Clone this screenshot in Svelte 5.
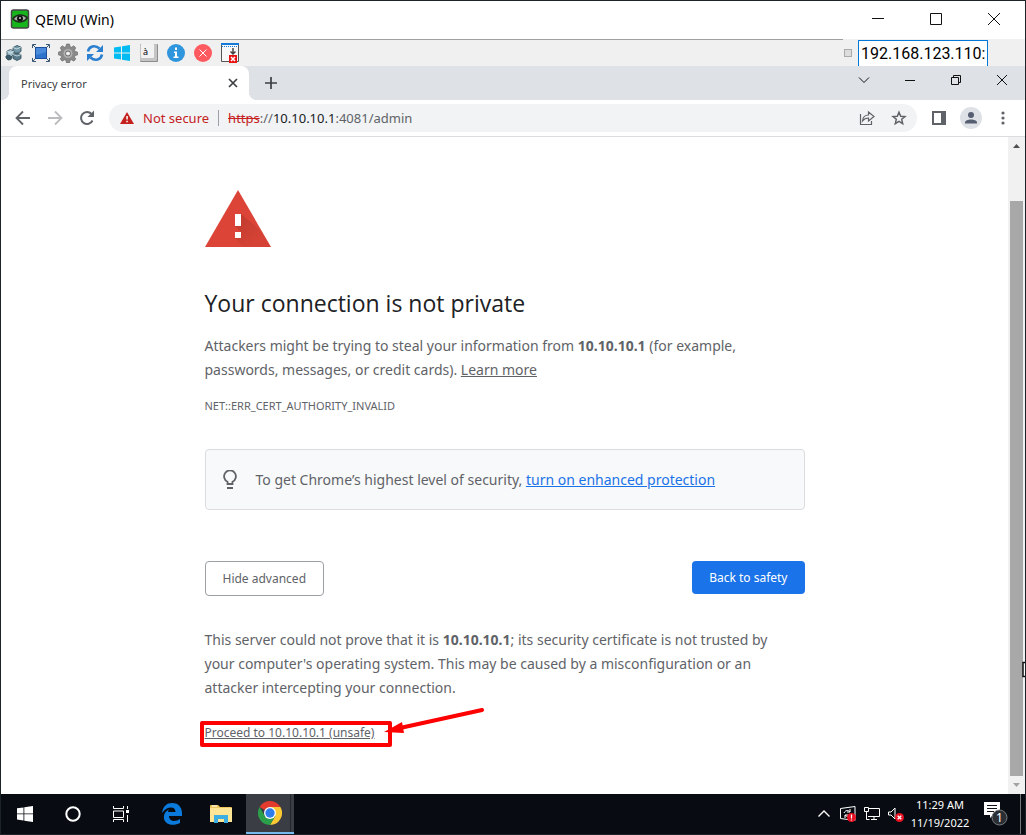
<script lang="ts">
	let address = "192.168.123.110:";
	let url = "https://10.10.10.1:4081/admin";
	let host = "10.10.10.1";
	let advanced = true;

	$: scheme = url.split("://")[0];
	$: rest = url.split(host)[1];
</script>

<div class="desktop">
	<header class="title-bar">
		<svg class="app-icon" width="20" height="20" viewBox="0 0 20 20">
			<rect x="1.500" y="1" width="17" height="18" rx="2" fill="#17b51c" stroke="#444" stroke-width="1.500" />
			<path d="M2 10C5 4 15 4 18 9C15 15 6 15 2 10Z" fill="#1c2b1c" />
			<path d="M4 10C7 6 13 6 16 9C13 13 8 13 4 10Z" fill="#a8b3a8" />
			<circle cx="10" cy="9.500" r="3" fill="#111" />
			<circle cx="10" cy="9" r="1" fill="#ccc" />
		</svg>
		<span class="app-name">QEMU (Win)</span>
		<div class="controls outer">
			<button aria-label="Minimize"><svg width="14" height="14" viewBox="0 0 14 14"><path d="M1 6.500h12" /></svg></button>
			<button aria-label="Maximize"><svg width="14" height="14" viewBox="0 0 14 14"><path d="M1.500 1.500h11v11h-11z" /></svg></button>
			<button aria-label="Close"><svg width="14" height="14" viewBox="0 0 14 14"><path d="M1 1l12 12M13 1L1 13" /></svg></button>
		</div>
	</header>

	<div class="toolbar">
		<button aria-label="Devices">
			<svg width="20" height="20" viewBox="0 0 20 20" stroke="#2e4a57" stroke-width=".8">
				<path d="M9 4.500l4-2 4 1.500v4.500l-4 2-4-2z" fill="#7197a8" />
				<path d="M3 8l3.500-1.500L10 8v4l-3.500 2L3 12z" fill="#a7c4d1" />
				<path d="M9 11.500l4-1.500 4 1.500v4L13 17.500l-4-2z" fill="#587c8e" />
				<path d="M3 8l3.500 2L10 8M9 4.500l4 1.500 4-2M9 11.500l4 1.500 4-1.500" fill="none" stroke="#dbe8ee" />
				<path d="M2 13l3-1 3 2-1 2.500-3 .5-2-2z" fill="#3a5968" />
			</svg>
		</button>
		<button aria-label="Full screen">
			<svg width="20" height="20" viewBox="0 0 20 20">
				<rect x="4.500" y="4.500" width="11" height="11" fill="#2e74cc" stroke="#1b4f9a" />
				<path d="M5 5h10v4L5 12z" fill="#4a8bdc" />
				<path d="M1.500 5V1.500H5M15 1.500h3.500V5M18.500 15v3.500H15M5 18.500H1.500V15M2 2l2 2M18 2l-2 2M18 18l-2-2M2 18l2-2" fill="none" stroke="#3a5875" />
			</svg>
		</button>
		<button aria-label="Settings">
			<svg width="20" height="20" viewBox="0 0 20 20">
				<path d="M8.500 1h3l.5 2.500 1.500.7 2.300-1.400 2 2.100-1.300 2.100.6 1.500 2.400.5v3l-2.400.5-.6 1.500 1.300 2.100-2 2.100-2.300-1.400-1.500.7-.5 2.500h-3L8 17.500l-1.500-.7-2.300 1.400-2-2.100L3.500 14l-.6-1.500L.5 12V9l2.400-.5L3.500 7 2.200 4.900l2-2.100 2.300 1.400L8 3.500z" fill="#8a8a8a" stroke="#666" stroke-width=".6" />
				<circle cx="10" cy="10.500" r="4.500" fill="#b2b2b2" />
				<circle cx="10" cy="10.500" r="2.500" fill="#efefef" stroke="#666" />
			</svg>
		</button>
		<button aria-label="Refresh">
			<svg width="20" height="20" viewBox="0 0 20 20">
				<path d="M3 8.500C4 3 10 1.500 14.500 5.500M17 11.500c-1 5.500-7 7-11.500 3" fill="none" stroke="#2b7fd0" stroke-width="2.600" />
				<path d="M18 2v7h-7zM2 18v-7h7z" fill="#2b7fd0" />
			</svg>
		</button>
		<button aria-label="Windows key">
			<svg width="20" height="20" viewBox="0 0 20 20">
				<path d="M2 4.500l7-1V9.500H2zM10 3.300l8-1.300v7.500h-8zM2 10.500h7v6l-7-1zM10 10.500h8V18l-8-1.300z" fill="#00bcf2" />
			</svg>
		</button>
		<button aria-label="Keyboard">
			<svg width="20" height="20" viewBox="0 0 20 20">
				<rect x="1" y="1" width="18" height="18" rx="1" fill="#8d8d8d" />
				<rect x="1" y="1" width="17" height="17" rx="1" fill="#c4c4c4" />
				<rect x="2" y="1" width="13" height="14" rx="1" fill="#f2f2f2" />
				<text x="4" y="12" font-size="9">à</text>
			</svg>
		</button>
		<button aria-label="Information">
			<svg width="20" height="20" viewBox="0 0 20 20">
				<circle cx="10" cy="10" r="9" fill="#2f95dc" />
				<path d="M9 4.500h2V7H9zM8 8.500h3v5h1.500V15H7.500v-1.500H9V10H8z" fill="#fff" />
			</svg>
		</button>
		<button aria-label="Disconnect">
			<svg width="20" height="20" viewBox="0 0 20 20">
				<circle cx="10" cy="10" r="9" fill="#ff5a5f" />
				<path d="M6.500 6.500l7 7M13.500 6.500l-7 7" stroke="#fff" />
			</svg>
		</button>
		<button aria-label="Detach">
			<svg width="20" height="20" viewBox="0 0 20 20">
				<path d="M1.500 1v17.500h17V1" fill="#f8f8f8" stroke="#555" />
				<path d="M1 0h18v2H1z" fill="#1479d7" />
				<path d="M2 3.500h16" stroke="#1479d7" stroke-dasharray="1 1" />
				<path d="M13 5v6M10.500 8.500L13 11l2.500-2.500" fill="none" stroke="#444" stroke-width="1.500" />
				<rect x="9" y="12" width="8" height="8" fill="#e81313" />
				<path d="M11 14l4 4M15 14l-4 4" stroke="#fff" stroke-width="1.500" />
			</svg>
		</button>
		<i class="grip"></i>
		<input class="target" aria-label="Host address" bind:value={address} />
	</div>

	<div class="tab-strip">
		<div class="tab">
			<span>Privacy error</span>
			<button aria-label="Close tab"><svg width="10" height="10" viewBox="0 0 10 10"><path d="M1 1l8 8M9 1L1 9" stroke="#3c4043" stroke-width="1.700" /></svg></button>
		</div>
		<button class="new-tab" aria-label="New tab"><svg width="14" height="14" viewBox="0 0 14 14"><path d="M7 1v12M1 7h12" stroke="#3c4043" stroke-width="1.700" /></svg></button>
		<div class="controls">
			<button aria-label="Search tabs"><svg width="12" height="12" viewBox="0 0 12 12"><path d="M1 3.500l5 5 5-5" /></svg></button>
			<button aria-label="Minimize"><svg width="12" height="12" viewBox="0 0 12 12"><path d="M1 6.500h10" /></svg></button>
			<button aria-label="Restore"><svg width="12" height="12" viewBox="0 0 12 12"><path d="M1.500 3.500h7v7h-7zM3.500 3.500v-2h7v7h-2" /></svg></button>
			<button aria-label="Close"><svg width="12" height="12" viewBox="0 0 12 12"><path d="M1 1l10 10M11 1L1 11" /></svg></button>
		</div>
	</div>

	<nav class="address-bar">
		<button aria-label="Back"><svg width="16" height="16" viewBox="0 0 16 16" fill="none"><path d="M15 8H2M8 1.500L1.500 8 8 14.500" stroke="#5f6368" stroke-width="1.800" /></svg></button>
		<button aria-label="Forward" disabled><svg width="16" height="16" viewBox="0 0 16 16" fill="none"><path d="M1 8h13M8 1.500L14.500 8 8 14.500" stroke="#babcbe" stroke-width="1.800" /></svg></button>
		<button aria-label="Reload"><svg width="16" height="16" viewBox="0 0 16 16" fill="none"><path d="M13.500 10.500A6 6 0 1 1 12.500 4" stroke="#5f6368" stroke-width="2" /><path d="M15 .5V7H8.500z" fill="#5f6368" /></svg></button>
		<div class="omnibox">
			<svg width="14" height="12" viewBox="0 0 14 12"><path d="M7 0l7 12H0z" fill="#c5221f" /><path d="M6.300 4h1.500v3.500H6.300zM6.300 8.700h1.500v1.500H6.300z" fill="#fff" /></svg>
			<span class="warning">Not secure</span>
			<i class="divider"></i>
			<span class="url"><s>{scheme}</s>://<b>{host}</b>{rest}</span>
			<button aria-label="Share"><svg width="16" height="16" viewBox="0 0 16 16" fill="none"><path d="M1.500 4v10.500h11V11M3.500 11c.4-4 2.600-6 6-6V2L15 6.500 9.500 11V8c-2.700 0-4.500 1-6 3z" stroke="#5f6368" stroke-width="1.200" /></svg></button>
			<button aria-label="Bookmark"><svg width="16" height="16" viewBox="0 0 16 16" fill="none"><path d="M8 2.200l1.700 4 4.300.3-3.300 2.800 1 4.300L8 11.400l-3.700 2.200 1-4.300L2 6.500l4.300-.3z" stroke="#5f6368" stroke-width="1.500" /></svg></button>
		</div>
		<button aria-label="Side panel"><svg width="14" height="14" viewBox="0 0 14 14" fill="none"><path d="M1 1h12v12H1z" stroke="#5f6368" stroke-width="2" /><path d="M9 1h5v12H9z" fill="#5f6368" /></svg></button>
		<button aria-label="Profile"><svg width="22" height="22" viewBox="0 0 22 22"><circle cx="11" cy="11" r="11" fill="#dee1e6" /><circle cx="11" cy="8" r="3" fill="#565e71" /><path d="M5 16.500v-1c0-4 12-4 12 0v1z" fill="#565e71" /></svg></button>
		<button aria-label="Menu"><svg width="4" height="14" viewBox="0 0 4 14" fill="#5f6368"><circle cx="2" cy="2" r="1.600" /><circle cx="2" cy="7" r="1.600" /><circle cx="2" cy="12" r="1.600" /></svg></button>
	</nav>

	<div class="viewport">
		<main>
			<svg class="alert" width="66" height="57" viewBox="0 0 66 57">
				<defs>
					<linearGradient id="shade" x1="0" y1="0" x2="1" y2="1">
						<stop offset=".1" stop-color="#b93a2d" stop-opacity=".8" />
						<stop offset=".7" stop-color="#b93a2d" stop-opacity=".15" />
					</linearGradient>
				</defs>
				<path d="M33 0l33 57H0z" fill="#db4437" />
				<path d="M36 24l21 18 9 15H39l-9-9 6-6-6-6z" fill="url(#shade)" />
				<path d="M30 24h6v12h-6zM30 42h6v6h-6z" fill="#fff" />
			</svg>
			<h1>Your connection is not private</h1>
			<p>
				Attackers might be trying to steal your information from <strong>{host}</strong> (for example,
				passwords, messages, or credit cards). <a href="#learn">Learn more</a>
			</p>
			<div class="code">NET::ERR_CERT_AUTHORITY_INVALID</div>
			<div class="promo">
				<svg width="16" height="20" viewBox="0 0 16 20"><path d="M5.500 14v-2.300a5.900 5.900 0 1 1 5 0V14z" fill="none" stroke="#5f6368" stroke-width="1.800" /><path d="M5 17h6v2H5z" fill="#5f6368" /></svg>
				<span>To get Chrome’s highest level of security, <a href="#protect">turn on enhanced protection</a></span>
			</div>
			<div class="actions">
				<button class="secondary" on:click={() => (advanced = !advanced)}>{advanced ? "Hide advanced" : "Advanced"}</button>
				<button class="primary">Back to safety</button>
			</div>
			{#if advanced}
				<p class="details">
					This server could not prove that it is <strong>{host}</strong>; its security certificate is not trusted by
					your computer's operating system. This may be caused by a misconfiguration or an
					attacker intercepting your connection.
				</p>
				<div class="proceed">
					<a href="#proceed">Proceed to {host} (unsafe)</a>
					<svg class="mark" width="290" height="42" viewBox="0 0 290 42">
						<rect x="2" y="15" width="188" height="22" fill="none" stroke="#f00" stroke-width="4" stroke-linejoin="round" />
						<path d="M282 2l-82 18" stroke="#f00" stroke-width="4" stroke-linecap="round" />
						<path d="M184 24l18-10 2 11z" fill="#f00" />
					</svg>
				</div>
			{/if}
		</main>
		<div class="scrollbar">
			<svg width="7" height="4" viewBox="0 0 7 4"><path d="M3.500 0L7 4H0z" fill="#505050" /></svg>
			<div class="thumb"></div>
			<svg width="7" height="4" viewBox="0 0 7 4"><path d="M0 0h7L3.500 4z" fill="#a3a3a3" /></svg>
			<svg class="pointer" width="3" height="18" viewBox="0 0 3 18"><path d="M3 1.500H1v14h2" fill="#fff" stroke="#111" stroke-width="1.500" /></svg>
		</div>
	</div>

	<footer class="taskbar">
		<button aria-label="Start"><svg width="16" height="16" viewBox="0 0 16 16"><path d="M0 2.300L6.500 1.400v6.100H0zM7.300 1.300L16 0v7.500H7.300zM0 8.300h6.500v6.200L0 13.600zM7.300 8.300H16V16l-8.700-1.300z" fill="#fff" /></svg></button>
		<button aria-label="Cortana"><svg width="16" height="16" viewBox="0 0 16 16"><circle cx="8" cy="8" r="6.700" fill="none" stroke="#fff" stroke-width="2" /></svg></button>
		<button class="tasks" aria-label="Task view"><svg width="16" height="16" viewBox="0 0 16 16"><path d="M.5 0v2.500h10V0M.5 5h10v6.500H.5zM.5 16v-2.500h10V16M14.500 0v3M14.500 9v7" fill="none" stroke="#fff" /><path d="M13 4h3v3h-3z" fill="#fff" /></svg></button>
		<button class="pinned" aria-label="Edge">
			<svg width="20" height="22" viewBox="0 0 20 22"><path d="M0 10C1 3 5 0 10 0c7 0 10 5 10 10v3H7c0 6 7 6 11 3v4C10 24 1 21 2 13c.3-3 2-5 5-6.500C6 8 6 9 6 9h7.500C13.500 3 5 3 0 10z" fill="#0a7bdc" /></svg>
		</button>
		<button class="pinned" aria-label="File Explorer">
			<svg width="22" height="18" viewBox="0 0 22 18"><path d="M0 1q0-1 1-1h7l2 2h11q1 0 1 1v14H0z" fill="#f0c75e" /><path d="M0 3h22v14H0z" fill="#ffe596" /><path d="M2 1h5" stroke="#fff" /><path d="M4 18v-8h14v8h-4v-4H8v4z" fill="#3daee2" /></svg>
		</button>
		<button class="pinned active" aria-label="Chrome">
			<svg width="24" height="24" viewBox="0 0 24 24">
				<path d="M12 12L1.600 6A12 12 0 0 1 22.400 6z" fill="#e33b2e" />
				<path d="M12 6h10.400A12 12 0 0 1 12 24l5.200-9z" fill="#fcc934" />
				<path d="M12 24A12 12 0 0 1 1.600 6l5.200 9 5.200 3 5.200-3z" fill="#2c9f4b" />
				<circle cx="12" cy="12" r="6" fill="#fff" />
				<circle cx="12" cy="12" r="4.700" fill="#2f7de9" />
			</svg>
		</button>
		<div class="tray">
			<svg width="16" height="16" viewBox="0 0 16 16" fill="none" stroke="#fff"><path d="M2.500 10.500L8 5l5.500 5.500" stroke-width="1.300" /></svg>
			<svg width="16" height="16" viewBox="0 0 16 16" fill="none" stroke="#fff"><path d="M.5 2.500L15 .5v14l-14.500-2z" /><path d="M4 7c1-3 5-3 6-1M10 3v3H7M11 8c-1 3-5 3-6 1M5 12V9h3" /><circle cx="11.500" cy="11.500" r="4.500" fill="#e81123" stroke="none" /><path d="M11.500 8.500v4M11.500 13.500v1" stroke-width="1.200" /></svg>
			<svg width="16" height="16" viewBox="0 0 16 16" fill="none" stroke="#fff"><path d="M5 2.500h10.500v8H4M7 13.500h6M10 10.500v3M.5 1.500h4v4h-4zM2.500 5.500v8h3" /></svg>
			<svg width="16" height="16" viewBox="0 0 16 16" fill="none" stroke="#fff"><path d="M.5 6h2.500l4-4v11l-4-4H.5z" /><circle cx="11.500" cy="11.500" r="4.500" fill="#e81123" stroke="none" /><path d="M9.700 9.700l3.600 3.600M13.300 9.700l-3.600 3.600" stroke-width="1.300" /></svg>
		</div>
		<div class="clock">
			<span>11:29 AM</span>
			<span>11/19/2022</span>
		</div>
		<button class="notices" aria-label="Notifications">
			<svg width="24" height="24" viewBox="0 0 24 24"><path d="M0 0h16v13H9l-3 3v-3H0z" fill="#fff" /><path d="M3 3.500h10M3 6.500h10M3 9.500h7" stroke="#10141a" /><circle cx="15.500" cy="15.500" r="7.500" fill="#2b2f33" stroke="#777c80" /><text x="12" y="20" font-size="12" fill="#fff">1</text></svg>
		</button>
	</footer>
</div>

<style>
	:global(body) {
		margin: 0;
	}

	.desktop {
		--text: #5f6368;
		box-sizing: border-box;
		display: flex;
		flex-direction: column;
		min-height: 100vh;
		border: 1px solid #1b2328;
		background-color: #fff;
		color: var(--text);
		font-family: "Segoe UI", "Noto Sans", sans-serif;
		font-size: 14px;
	}

	button {
		display: flex;
		align-items: center;
		justify-content: center;
		padding: 0;
		border: none;
		background: none;
		color: inherit;
		font: inherit;
	}

	a {
		color: inherit;
	}

	.title-bar {
		display: flex;
		align-items: center;
		box-sizing: border-box;
		height: 38px;
		padding: 0 2px 2px 9px;
		color: #000;
	}

	.app-name {
		margin-left: 5px;
	}

	.controls {
		display: flex;
		margin-left: auto;
	}

	.controls button {
		width: 46px;
		height: 28px;
	}

	.controls.outer button {
		width: 58px;
		height: 36px;
	}

	.controls path {
		fill: none;
		stroke: #111;
	}

	.toolbar {
		display: flex;
		align-items: center;
		height: 27px;
		padding-right: 37px;
		background: linear-gradient(#a0a0a0, #a0a0a0) 0 0 / calc(100% - 182px) 1px no-repeat #f0f0f0;
	}

	.toolbar button {
		width: 27px;
	}

	.toolbar button:first-child {
		width: 26px;
	}

	.grip {
		width: 6px;
		height: 6px;
		margin: 0 6px 0 auto;
		border: 1px solid #aaa;
		background-color: #ddd;
	}

	.target {
		box-sizing: border-box;
		align-self: flex-end;
		width: 130px;
		height: 26px;
		padding: 0 2px;
		border: 1px solid #0078d7;
		border-bottom: none;
		border-radius: 0;
		outline: none;
		color: #000;
		font: 16px Roboto, sans-serif;
	}

	.tab-strip {
		display: flex;
		height: 34px;
		background-color: #dee1e6;
	}

	.tab {
		position: relative;
		display: flex;
		align-items: center;
		justify-content: space-between;
		box-sizing: border-box;
		width: 240px;
		margin-left: 8px;
		padding: 0 9px 0 12px;
		border-radius: 8px 8px 0 0;
		background-color: #fff;
		color: #3c4043;
		font-size: 11px;
	}

	.tab::before,
	.tab::after {
		content: "";
		position: absolute;
		bottom: 0;
		width: 8px;
		height: 8px;
	}

	.tab::before {
		right: 100%;
		background: radial-gradient(circle at 0 0, #dee1e6 8px, #fff 8px);
	}

	.tab::after {
		left: 100%;
		background: radial-gradient(circle at 100% 0, #dee1e6 8px, #fff 8px);
	}

	.tab button {
		width: 14px;
		height: 16px;
	}

	.new-tab {
		width: 44px;
	}

	.address-bar {
		display: flex;
		align-items: center;
		height: 36px;
		padding: 0 6px;
		border-bottom: 1px solid #dadce0;
		font-size: 13px;
	}

	.address-bar button {
		width: 32px;
		height: 28px;
	}

	.omnibox {
		display: flex;
		flex: 1;
		align-items: center;
		box-sizing: border-box;
		height: 28px;
		margin: 0 6px;
		padding: 0 2px 0 11px;
		border-radius: 14px;
		background-color: #f1f3f4;
	}

	.warning {
		margin-left: 9px;
		color: #c5221f;
	}

	.divider {
		width: 1px;
		height: 16px;
		margin: 0 9px;
		background-color: #9aa0a6;
	}

	.url {
		flex: 1;
	}

	.url s {
		color: #c5221f;
	}

	.url b {
		color: #202124;
		font-weight: 400;
	}

	.viewport {
		display: flex;
		flex: 1;
	}

	main {
		width: 100%;
		max-width: 600px;
		margin: 0 auto;
		padding-top: 53px;
	}

	.alert {
		display: block;
	}

	h1 {
		margin: 40px 0 15px;
		color: #202124;
		font-family: "Segoe UI", "Open Sans", sans-serif;
		font-size: 23px;
		font-weight: 400;
		line-height: 32px;
	}

	p {
		margin: 0;
		line-height: 24px;
	}

	.code {
		margin-top: 14px;
		font-size: 11px;
		line-height: 20px;
	}

	.promo {
		display: flex;
		align-items: center;
		gap: 18px;
		box-sizing: border-box;
		height: 61px;
		margin-top: 33px;
		padding: 0 16px;
		border: 1px solid #dadce0;
		border-radius: 4px;
		background-color: #f8f9fa;
	}

	.promo a {
		color: #1a73e8;
	}

	.actions {
		display: flex;
		align-items: flex-start;
		justify-content: space-between;
		margin-top: 51px;
	}

	.actions button {
		height: 33px;
		padding: 0 17px;
		border-radius: 4px;
		font-size: 12px;
	}

	.actions .secondary {
		height: 35px;
		border: 1px solid #9aa0a6;
	}

	.actions .primary {
		background-color: #1a73e8;
		color: #fff;
	}

	.details {
		margin-top: 32px;
		padding-right: 16px;
	}

	.proceed {
		position: relative;
		margin-top: 23px;
		font-size: 12px;
		line-height: 20px;
	}

	.mark {
		position: absolute;
		left: -5px;
		top: -15px;
	}

	.scrollbar {
		position: relative;
		display: flex;
		flex-direction: column;
		align-items: center;
		gap: 7px;
		width: 17px;
		padding: 7px 0;
		background-color: #f1f1f1;
	}

	.thumb {
		flex: 1;
		width: 13px;
		margin-top: 46px;
		background-color: #a8a8a8;
	}

	.pointer {
		position: absolute;
		right: 0;
		bottom: 115px;
	}

	.taskbar {
		display: flex;
		height: 40px;
		background-color: #080c12;
		color: #fff;
	}

	.taskbar button {
		width: 48px;
	}

	.taskbar .tasks {
		margin-right: 2px;
	}

	.taskbar .pinned {
		width: 49px;
	}

	.taskbar .active {
		box-sizing: border-box;
		width: 48px;
		margin-left: 1px;
		border-bottom: 2px solid #76b9ed;
		background: linear-gradient(#24272c, #24272c) 44px 0 / 1px 100% no-repeat #3a3d43;
	}

	.tray {
		display: flex;
		align-items: center;
		gap: 8px;
		margin-left: auto;
	}

	.clock {
		display: flex;
		flex-direction: column;
		justify-content: center;
		width: 72px;
		font-size: 11px;
		line-height: 18px;
		text-align: center;
	}

	.taskbar .notices {
		justify-content: flex-start;
		width: 45px;
		padding-left: 8px;
		margin-right: 4px;
		border-right: 1px solid #777;
	}
</style>
